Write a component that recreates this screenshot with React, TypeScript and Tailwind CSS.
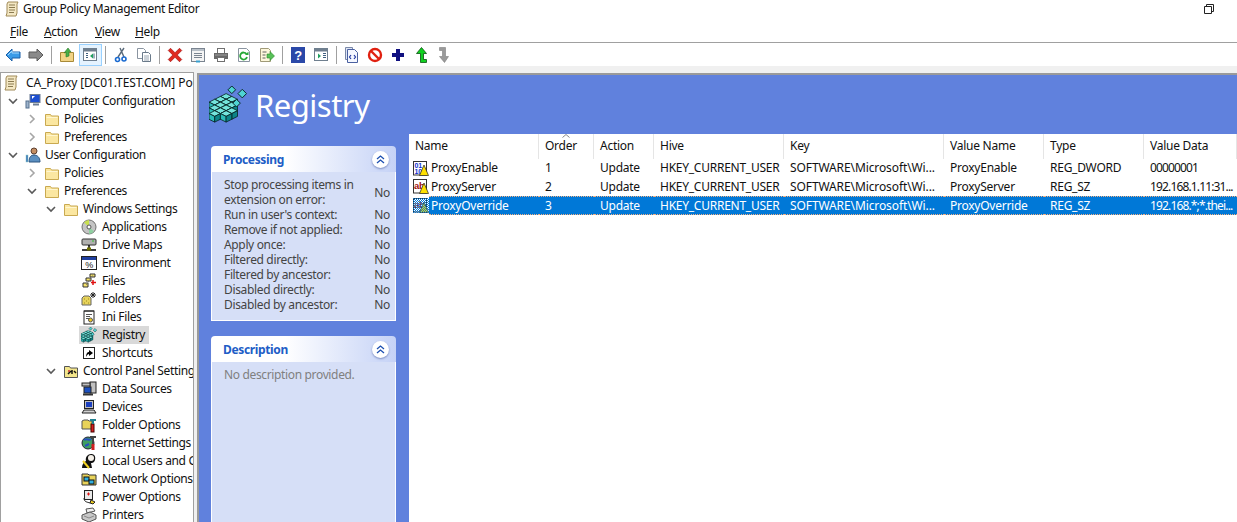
import type { ReactNode } from "react";

const Svg = ({ children, s = 16, vb = 16 }: { children: ReactNode; s?: number; vb?: number }) => (
  <svg width={s} height={s} viewBox={`0 0 ${vb} ${vb}`} className="shrink-0">
    {children}
  </svg>
);

// ---- tree chevrons
const ChevronDown = () => (
  <svg width="10" height="10" viewBox="0 0 10 10">
    <path d="M1 3l4 4 4-4" fill="none" stroke="#595959" strokeWidth="1.6" />
  </svg>
);
const ChevronRight = () => (
  <svg width="10" height="10" viewBox="0 0 10 10">
    <path d="M3 1l4 4-4 4" fill="none" stroke="#a6a6a6" strokeWidth="1.6" />
  </svg>
);

// ---- scroll / policy icon
const ScrollIcon = ({ s = 16 }: { s?: number }) => (
  <Svg s={s}>
    <path d="M4 1h10l-1 2v9l-1 3H2l1-3V3z" fill="#f4e8c4" stroke="#a08a58" />
    <path d="M5 4h6M5 6.500h6M5 9h6M5 11.500h5" stroke="#8a7a50" />
  </Svg>
);

const Folder = () => (
  <Svg>
    <path d="M1.500 3.500h5l1 1.500h7v9.500h-13z" fill="#fbe7a1" stroke="#c9a950" />
    <path d="M2.500 6.500h11" stroke="#fff6d0" />
  </Svg>
);

const MonitorIcon = () => (
  <Svg>
    <rect x="1" y="8" width="3" height="7" fill="#9fb4cc" stroke="#55708f" />
    <rect x="5" y="1.500" width="10" height="8" fill="#1d4fd0" stroke="#6d7d94" />
    <path d="M7 3l3 0-3 3z" fill="#fff" />
    <path d="M8 11.500h6" stroke="#6d7d94" strokeWidth="2" />
  </Svg>
);

const UserIcon = () => (
  <Svg>
    <circle cx="9" cy="4" r="3" fill="#c48e62" stroke="#5d4030" />
    <path d="M4 15c0-5 2-7 5-7s6 2 6 7z" fill="#5b8fc0" stroke="#2c5580" />
    <rect x="1" y="8" width="2" height="7" fill="#3a78b8" stroke="#9cc" strokeWidth=".5" />
  </Svg>
);

const CdIcon = () => (
  <Svg>
    <circle cx="8" cy="8" r="7" fill="#c4c4c4" stroke="#707070" />
    <path d="M8 8L3 3.500A7 7 0 0 1 8 1z" fill="#c8e050" />
    <path d="M8 8l5 4.500A7 7 0 0 1 8 15z" fill="#8fd0a0" />
    <circle cx="8" cy="8" r="2" fill="#fff" stroke="#555" />
  </Svg>
);

const DriveIcon = () => (
  <Svg>
    <rect x="1" y="2" width="14" height="6" rx="1" fill="#b0b0b0" stroke="#333" />
    <path d="M11 4h2" stroke="#30c030" />
    <path d="M8 8v4M1 13h14" stroke="#000" strokeWidth="1.500" />
    <rect x="6" y="10.500" width="4" height="3" fill="#707000" />
  </Svg>
);

const EnvIcon = () => (
  <Svg>
    <rect x=".5" y="1.500" width="15" height="13" fill="#fff" stroke="#222" />
    <rect x="1" y="2" width="14" height="3" fill="#1f3f9f" />
    <text x="8" y="13" fontSize="9" textAnchor="middle" fontFamily="Liberation Sans" fill="#111">%</text>
  </Svg>
);

const FilesIcon = () => (
  <Svg>
    <path d="M9 1h5v3H9zM5 5h5v3H5zM2 10h5v4H2z" fill="#f5e26a" stroke="#333" />
    <path d="M7 9L12 2M5 12l3-3" stroke="#666" strokeDasharray="1 1" />
    <path d="M12 7v5M10 9.500h5" stroke="#e01010" strokeWidth="1.500" />
  </Svg>
);

const FolderStarIcon = () => (
  <Svg>
    <path d="M1 7l2-2h5l2 2v7H1z" fill="#e8d35a" stroke="#666" />
    <path d="M3 8h1M5 10h1M3 12h1M7 8h1M7 12h1" stroke="#998a20" />
    <path d="M12 1v6M9 4h6M10 2l4 4M14 2l-4 4" stroke="#222" />
  </Svg>
);

const IniIcon = () => (
  <Svg>
    <rect x="3" y="2" width="10" height="13" fill="#fff" stroke="#222" />
    <path d="M4 1v2M6 1v2M8 1v2M10 1v2M12 1v2" stroke="#222" />
    <path d="M5 5.500h6M5 7.500h4M5 9.500h3" stroke="#555" />
    <circle cx="9.500" cy="11" r="2" fill="#f0c820" stroke="#555" />
  </Svg>
);

const Cube = ({ x, y, s }: { x: number; y: number; s: number }) => (
  <g stroke="#062424" strokeWidth={s / 7}>
    <path d={`M${x} ${y}l${s} ${-s / 2} ${s} ${s / 2} ${-s} ${s / 2}z`} fill="#74e4dc" />
    <path d={`M${x} ${y}l${s} ${s / 2}v${s}l${-s} ${-s / 2}z`} fill="#2cbcb8" />
    <path d={`M${x + 2 * s} ${y}l${-s} ${s / 2}v${s}l${s} ${-s / 2}z`} fill="#0c8488" />
  </g>
);

const cubes = [
  [12, 11], [6, 14], [18, 14], [0, 17], [12, 17], [6, 20], [18, 20],
  [0, 23], [12, 23], [18, 26], [6, 26], [0, 29], [12, 29],
];

const RegistryIcon = ({ s = 16 }: { s?: number }) => (
  <Svg s={s} vb={40}>
    {cubes.map(([x, y]) => (
      <Cube key={`${x}-${y}`} x={x} y={y} s={6} />
    ))}
    <path d="M24 0l4 4-4 4-4-4zM35 3.500l4.500 4.500-4.500 4.500-4.500-4.500zM29 14l4 4-4 4-4-4z" fill="#4fd4d4" stroke="#062424" />
  </Svg>
);

const ShortcutIcon = () => (
  <Svg>
    <rect x="2.500" y="2.500" width="11" height="11" fill="#fff" stroke="#222" />
    <path d="M5 12c0-3 1-5 3-5V5l4 3-4 3V9c-1 0-2 1-3 3z" fill="#000" />
  </Svg>
);

const CpFolderIcon = () => (
  <Svg>
    <path d="M1.500 3.500h5l1 1.500h7v9.500h-13z" fill="#f3e58a" stroke="#555" />
    <path d="M5 11l3-3M9 11V7M11 8l2 2" stroke="#111" strokeWidth="1.500" />
    <path d="M5 8h2" stroke="#d03030" strokeWidth="1.500" />
  </Svg>
);

const DataIcon = () => (
  <Svg>
    <rect x="9" y="1" width="6" height="11" fill="#c0c0c0" stroke="#222" />
    <rect x="1" y="2" width="8" height="3" fill="#c0c0c0" stroke="#222" />
    <rect x="3" y="6" width="7" height="6" fill="#1c50c0" stroke="#222" />
    <path d="M2 13.500h10" stroke="#333" strokeWidth="2" />
  </Svg>
);

const DevicesIcon = () => (
  <Svg>
    <rect x="3.500" y="1.500" width="9" height="8" fill="#c0c0c0" stroke="#222" />
    <rect x="5" y="3" width="6" height="5" fill="#1c40c0" />
    <path d="M1 14l2-3h10l2 3z" fill="#d0d0d0" stroke="#222" />
  </Svg>
);

const FolderOptIcon = () => (
  <Svg>
    <path d="M1 4l2-1h4l1 1h3v8H1z" fill="#e8d35a" stroke="#555" />
    <rect x="10" y="7" width="3" height="8" fill="#d82020" stroke="#400" />
    <path d="M9 3h6M12 3v4" stroke="#208090" strokeWidth="2" />
  </Svg>
);

const InternetIcon = () => (
  <Svg>
    <circle cx="7" cy="8" r="6" fill="#3f9f60" stroke="#223" />
    <path d="M3 5c3-2 5 1 7-1M4 11l4-2" stroke="#2850c0" strokeWidth="2" />
    <path d="M9 2h6M12 2v12" stroke="#444" strokeWidth="2" />
    <rect x="10.500" y="9" width="3" height="6" fill="#d02020" />
  </Svg>
);

const UsersIcon = () => (
  <Svg>
    <path d="M1 15c0-4 2-6 4-7-1-4 2-7 5-7 3 0 5 2 4 6-1 3-3 3-4 3l1 5z" fill="#111" />
    <circle cx="10" cy="5" r="3" fill="#f5f0e8" />
    <path d="M2 8l6 7" stroke="#f0d020" strokeWidth="2" />
  </Svg>
);

const NetworkIcon = () => (
  <Svg>
    <path d="M1 3h6l1 1h7v10H1z" fill="#e8d35a" stroke="#333" />
    <rect x="3" y="6" width="5" height="4" fill="#30b0e0" stroke="#111" />
    <rect x="8" y="9" width="5" height="4" fill="#30b0e0" stroke="#111" />
  </Svg>
);

const PowerIcon = () => (
  <Svg>
    <rect x="3.500" y="1.500" width="8" height="9" fill="#e8e8e8" stroke="#222" />
    <path d="M7.500 3.500v3M6 5h3" stroke="#e01010" />
    <path d="M3 9c0 4 3 4 6 5" fill="none" stroke="#222" />
    <path d="M10 11l4 2-2 2-3-1z" fill="#f0d020" stroke="#222" />
  </Svg>
);

const PrinterIcon = () => (
  <Svg>
    <path d="M5 2l7-1 2 3-8 2z" fill="#f0f0f0" stroke="#555" />
    <path d="M1 8l8-3 6 3v4l-7 3-7-3z" fill="#c8c8c8" stroke="#555" />
    <path d="M3 9l5 2 5-2" stroke="#888" fill="none" />
  </Svg>
);

// ---- toolbar icons
const ArrowLeft = () => (
  <Svg>
    <path d="M1 8l6-6v3h8v6H7v3z" fill="#3a9be8" stroke="#1a5fa8" />
    <path d="M3 8l4-4v2h7" fill="none" stroke="#a8dcff" />
  </Svg>
);
const ArrowRight = () => (
  <Svg>
    <path d="M15 8L9 2v3H1v6h8v3z" fill="#8a8a8a" stroke="#5a5a5a" />
  </Svg>
);
const UpFolder = () => (
  <Svg>
    <path d="M1.500 5.500h13v9h-13z" fill="#f2d486" stroke="#a88a38" />
    <path d="M7 10V5L5 6l4-5 3 4-2-.5V9z" fill="#48b048" stroke="#2a7a2a" strokeWidth=".6" />
  </Svg>
);
const PaneLeft = () => (
  <Svg>
    <rect x="1.500" y="1.500" width="13" height="12" fill="#fff" stroke="#6f7f8f" />
    <rect x="2" y="2" width="12" height="2.500" fill="#6f7f8f" />
    <path d="M4 6.500h2M4 8.500h2M4 10.500h2M12 6.500v5" stroke="#406080" />
    <path d="M11 6.500v5L8 9z" fill="#20a060" />
  </Svg>
);
const PaneRight = () => (
  <Svg>
    <rect x="1.500" y="1.500" width="13" height="12" fill="#fff" stroke="#6f7f8f" />
    <rect x="2" y="2" width="12" height="2.500" fill="#6f7f8f" />
    <path d="M10 6.500h3M10 8.500h3M10 10.500h3" stroke="#406080" />
    <path d="M5 6.500v5L8 9z" fill="#20a060" />
  </Svg>
);
const CutIcon = () => (
  <Svg>
    <path d="M5 10l6-9M11 10L7 1" stroke="#5a6a7a" strokeWidth="1.400" />
    <circle cx="4.500" cy="12.500" r="2" fill="none" stroke="#1a6ad0" strokeWidth="1.600" />
    <circle cx="11" cy="12" r="2" fill="none" stroke="#1a6ad0" strokeWidth="1.600" />
  </Svg>
);
const CopyIcon = () => (
  <Svg>
    <path d="M1.500 1.500h6l2 2v8h-8z" fill="#fff" stroke="#8a94a0" />
    <path d="M6.500 5.500h6l2 2v7h-8z" fill="#fff" stroke="#6a7a8a" />
    <path d="M8 9h5M8 11h5M8 13h5" stroke="#9aa6b2" />
  </Svg>
);
const DeleteIcon = () => (
  <Svg s={18} vb={16}>
    <path d="M2 4l2-2 4 4 4-4 2 2-4 4 4 4-2 2-4-4-4 4-2-2 4-4z" fill="#e02a20" stroke="#a01010" strokeWidth=".6" />
  </Svg>
);
const PropsIcon = () => (
  <Svg>
    <rect x="1.500" y="1.500" width="13" height="13" fill="#f4f4f4" stroke="#7a8490" />
    <rect x="2" y="2" width="12" height="2" fill="#b8c0c8" />
    <path d="M4 6.500h8M4 8.500h8M4 10.500h8" stroke="#7a8490" />
    <path d="M6 14.500h4" stroke="#38a0d0" strokeWidth="2" />
  </Svg>
);
const PrintIcon = () => (
  <Svg>
    <rect x="4.500" y="1.500" width="7" height="5" fill="#fff" stroke="#707070" />
    <rect x="1" y="6" width="14" height="6" fill="#686868" />
    <rect x="4.500" y="10.500" width="7" height="4" fill="#fff" stroke="#707070" />
    <path d="M2 8h12" stroke="#a0a0a0" />
  </Svg>
);
const RefreshIcon = () => (
  <Svg>
    <path d="M2.500 1.500h8l3 3v10h-11z" fill="#fff" stroke="#8a94a0" />
    <path d="M10.500 7a3.500 3.500 0 1 0 .5 3" fill="none" stroke="#28a838" strokeWidth="1.800" />
    <path d="M9 8h3.500V4.500z" fill="#28a838" />
  </Svg>
);
const ExportIcon = () => (
  <Svg>
    <path d="M1.500 1.500h8l2 2v11h-10z" fill="#fdf7dc" stroke="#a09a78" />
    <path d="M3.500 5h4M3.500 8h3M3.500 11h3" stroke="#606060" />
    <path d="M8 7h3V4.500L15.500 9 11 13.500V11H8z" fill="#58c058" stroke="#2a8a2a" strokeWidth=".6" />
  </Svg>
);
const HelpIcon = () => (
  <svg width="14" height="16" viewBox="0 0 14 16">
    <rect width="14" height="16" fill="#2a48a8" />
    <text x="7" y="13" fontSize="13" fontWeight="700" textAnchor="middle" fontFamily="Liberation Sans" fill="#fff">?</text>
  </svg>
);
const DocCodeIcon = () => (
  <Svg>
    <path d="M1.500 .5h7v12h-7z" fill="#dfe6f6" stroke="#7a88a8" />
    <path d="M3.500 2.500h7l3 3v10h-10z" fill="#f4f7ff" stroke="#4a60a0" />
    <path d="M7 8L5.500 10 7 12M10 8l1.500 2L10 12" fill="none" stroke="#2038a0" strokeWidth="1.200" />
  </Svg>
);
const NoIcon = () => (
  <Svg>
    <circle cx="8" cy="8" r="6" fill="#fff" stroke="#e02010" strokeWidth="2.400" />
    <path d="M4 4l8 8" stroke="#e02010" strokeWidth="2.400" />
  </Svg>
);
const PlusIcon = () => (
  <svg width="12" height="12" viewBox="0 0 12 12">
    <path d="M4 0h4v4h4v4H8v4H4V8H0V4h4z" fill="#101080" />
  </svg>
);
const UpGreen = () => (
  <svg width="11" height="16" viewBox="0 0 11 16">
    <path d="M5.500 .5l5 6H7.500v6h3v3h-6v-9H.5z" fill="#10d020" stroke="#0a5010" strokeWidth=".8" />
  </svg>
);
const DownGray = () => (
  <svg width="11" height="16" viewBox="0 0 11 16">
    <path d="M.5 .5h6v9h3l-4 6-5-6h3v-6h-3z" fill="#9a9a9a" stroke="#808080" strokeWidth=".6" />
  </svg>
);

// ---- list icons
const RegDoc = ({ kind, selected }: { kind: "bin" | "ab"; selected?: boolean }) => (
  <svg width="16" height="15" viewBox="0 0 16 15" className="shrink-0">
    <defs>
      <pattern id="dither" width="2" height="2" patternUnits="userSpaceOnUse">
        <rect width="1" height="1" fill="#0078d7" />
        <rect x="1" y="1" width="1" height="1" fill="#0078d7" />
      </pattern>
    </defs>
    <rect x=".5" y=".5" width="13" height="13.500" fill="#fff" stroke="#333" />
    {kind === "bin" ? (
      <g fill="#1030d0" fontFamily="Liberation Sans" fontWeight="700" fontSize="7">
        <text x="1.500" y="6.500">01</text>
        <text x="1.500" y="13">10</text>
      </g>
    ) : (
      <text x="1" y="10" fill="#a01010" fontFamily="Liberation Sans" fontWeight="700" fontSize="9.500">ab</text>
    )}
    <path d="M11 4l4.500 10.500H6.500z" fill="#ffe000" stroke="#222" strokeWidth=".7" />
    {selected && <rect width="16" height="15" fill="url(#dither)" />}
  </svg>
);

// ---- tree
const pads = {
  0: "pl-[7px]",
  1: "pl-[26px]",
  2: "pl-[45px]",
  3: "pl-[80px]",
};

type TreeItem = {
  label: string;
  level: 0 | 1 | 2 | 3;
  icon: ReactNode;
  chevron?: "down" | "right";
  active?: boolean;
};

const tree: TreeItem[] = [
  { label: "Computer Configuration", level: 0, icon: <MonitorIcon />, chevron: "down" },
  { label: "Policies", level: 1, icon: <Folder />, chevron: "right" },
  { label: "Preferences", level: 1, icon: <Folder />, chevron: "right" },
  { label: "User Configuration", level: 0, icon: <UserIcon />, chevron: "down" },
  { label: "Policies", level: 1, icon: <Folder />, chevron: "right" },
  { label: "Preferences", level: 1, icon: <Folder />, chevron: "down" },
  { label: "Windows Settings", level: 2, icon: <Folder />, chevron: "down" },
  { label: "Applications", level: 3, icon: <CdIcon /> },
  { label: "Drive Maps", level: 3, icon: <DriveIcon /> },
  { label: "Environment", level: 3, icon: <EnvIcon /> },
  { label: "Files", level: 3, icon: <FilesIcon /> },
  { label: "Folders", level: 3, icon: <FolderStarIcon /> },
  { label: "Ini Files", level: 3, icon: <IniIcon /> },
  { label: "Registry", level: 3, icon: <RegistryIcon />, active: true },
  { label: "Shortcuts", level: 3, icon: <ShortcutIcon /> },
  { label: "Control Panel Settings", level: 2, icon: <CpFolderIcon />, chevron: "down" },
  { label: "Data Sources", level: 3, icon: <DataIcon /> },
  { label: "Devices", level: 3, icon: <DevicesIcon /> },
  { label: "Folder Options", level: 3, icon: <FolderOptIcon /> },
  { label: "Internet Settings", level: 3, icon: <InternetIcon /> },
  { label: "Local Users and Groups", level: 3, icon: <UsersIcon /> },
  { label: "Network Options", level: 3, icon: <NetworkIcon /> },
  { label: "Power Options", level: 3, icon: <PowerIcon /> },
  { label: "Printers", level: 3, icon: <PrinterIcon /> },
];

const TreeRow = ({ item }: { item: TreeItem }) => (
  <div className={`flex h-[18px] items-center whitespace-nowrap ${pads[item.level]}`}>
    {item.level < 3 && (
      <span className="flex w-[10px] justify-center">
        {item.chevron === "down" ? <ChevronDown /> : <ChevronRight />}
      </span>
    )}
    <span
      className={`flex h-[18px] items-center ${item.level < 3 ? "ml-[7px] gap-[4px]" : "gap-[5px]"} ${
        item.active ? "ml-[-2px] bg-[#d9d9d9] pl-[2px] pr-[4px]" : ""
      }`}
    >
      {item.icon}
      <span>{item.label}</span>
    </span>
  </div>
);

// ---- toolbar
const Sep = () => <span className="mx-[3.5px] h-[18px] w-px bg-[#a0a0a0]" />;
const Tool = ({ children, active }: { children: ReactNode; active?: boolean }) => (
  <span
    className={`flex h-[22px] w-[23px] items-center justify-center ${active ? "border border-[#99d1ff] bg-[#e5f3ff]" : ""}`}
  >
    {children}
  </span>
);

// ---- task panels
const Collapse = () => (
  <span className="flex h-[17px] w-[17px] items-center justify-center rounded-full bg-white shadow-[0_1px_2px_#7a8cc0]">
    <svg width="9" height="9" viewBox="0 0 9 9">
      <path d="M1 4l3.500-3L8 4M1 8l3.500-3L8 8" fill="none" stroke="#1c4fb0" strokeWidth="1.300" />
    </svg>
  </span>
);

const PanelHead = ({ title }: { title: string }) => (
  <div className="flex h-[26px] items-center justify-between rounded-t-[4px] bg-gradient-to-r from-white from-40% to-[#c5d2f6] pl-[12px] pr-[7px]">
    <span className="pt-[2px] font-bold text-[#215dc6]">{title}</span>
    <Collapse />
  </div>
);

const settings = [
  "Run in user's context:",
  "Remove if not applied:",
  "Apply once:",
  "Filtered directly:",
  "Filtered by ancestor:",
  "Disabled directly:",
  "Disabled by ancestor:",
];

const Setting = ({ children }: { children: ReactNode }) => (
  <div className="flex items-center justify-between pr-[5px] leading-[15px]">
    <span>{children}</span>
    <span>No</span>
  </div>
);

// ---- list
type Row = { name: string; order: string; value: string; type: string; data: string; kind: "bin" | "ab"; h: string };

const rows: Row[] = [
  { name: "ProxyEnable", order: "1", value: "ProxyEnable", type: "REG_DWORD", data: "00000001", kind: "bin", h: "h-[18px]" },
  { name: "ProxyServer", order: "2", value: "ProxyServer", type: "REG_SZ", data: "192.168.1.11:31...", kind: "ab", h: "h-[19px]" },
  { name: "ProxyOverride", order: "3", value: "ProxyOverride", type: "REG_SZ", data: "192.168.*;*.thei...", kind: "ab", h: "h-[19px]" },
];

const headers = [
  { label: "Name", w: "w-[130px]" },
  { label: "Order", w: "w-[55px]" },
  { label: "Action", w: "w-[60px]" },
  { label: "Hive", w: "w-[130px]" },
  { label: "Key", w: "w-[160px]" },
  { label: "Value Name", w: "w-[100px]" },
  { label: "Type", w: "w-[100px]" },
  { label: "Value Data", w: "w-[93px]" },
];

const Cell = ({ w, sel, children }: { w: string; sel: boolean; children: ReactNode }) => (
  <span
    className={`${w} flex items-center overflow-hidden whitespace-nowrap pl-[6px] ${
      sel ? "border-y border-dotted border-[#f4b183] bg-[#0078d7]" : ""
    }`}
  >
    {children}
  </span>
);

const App = () => {
  return (
    <div className="flex h-[522px] w-[1237px] flex-col overflow-hidden bg-white font-['Noto_Sans',sans-serif] text-[12px] tracking-[-0.35px] text-[#111]">
      <div className="flex h-[21px] items-center justify-between pb-[3px] pl-[4px] pr-[23px]">
        <div className="flex items-center gap-[3px]">
          <ScrollIcon />
          <span>Group Policy Management Editor</span>
        </div>
        <svg width="10" height="10" viewBox="0 0 10 10">
          <path d="M.5 2.500h7v7h-7zM2.500 2.500v-2h7v7h-2" fill="none" stroke="#222" />
        </svg>
      </div>

      <div className="flex h-[22px] items-center border-b border-[#a0a0a0] pl-[10px]">
        <span className="w-[34px]"><u>F</u>ile</span>
        <span className="w-[51px]"><u>A</u>ction</span>
        <span className="w-[40px]"><u>V</u>iew</span>
        <span><u>H</u>elp</span>
      </div>

      <div className="flex h-[23px] items-center pl-[1.5px]">
        <Tool><ArrowLeft /></Tool>
        <Tool><ArrowRight /></Tool>
        <Sep />
        <Tool><UpFolder /></Tool>
        <Tool active><PaneLeft /></Tool>
        <Sep />
        <Tool><CutIcon /></Tool>
        <Tool><CopyIcon /></Tool>
        <Sep />
        <Tool><DeleteIcon /></Tool>
        <Tool><PropsIcon /></Tool>
        <Tool><PrintIcon /></Tool>
        <Tool><RefreshIcon /></Tool>
        <Tool><ExportIcon /></Tool>
        <Sep />
        <Tool><HelpIcon /></Tool>
        <Tool><PaneRight /></Tool>
        <Sep />
        <Tool><DocCodeIcon /></Tool>
        <Tool><NoIcon /></Tool>
        <Tool><PlusIcon /></Tool>
        <Tool><UpGreen /></Tool>
        <Tool><DownGray /></Tool>
      </div>

      <div className="h-[6px] bg-[#f0f0f0]" />

      <div className="flex min-h-0 flex-1 bg-[#f0f0f0]">
        <div className="w-[194px] overflow-hidden border border-b-0 border-[#a0a0a0] bg-white pt-px">
          <div className="flex h-[18px] items-center gap-[7px] whitespace-nowrap pl-[2px] tracking-[-0.1px]">
            <ScrollIcon />
            <span>CA_Proxy [DC01.TEST.COM] Policy</span>
          </div>
          {tree.map((item, i) => (
            <TreeRow key={i} item={item} />
          ))}
        </div>

        <div className="ml-[3px] mt-px flex min-w-0 flex-1 flex-col border-l-2 border-t-2 border-[#9a9a9a] bg-[#6081dd]">
          <div className="flex h-[59px] shrink-0 items-center gap-[8px] pl-[10px] pt-[1px] text-white">
            <RegistryIcon s={38} />
            <span className="text-[31px] leading-none tracking-[-0.5px]">Registry</span>
          </div>

          <div className="flex min-h-0 flex-1">
            <div className="ml-[12px] mr-[13px] flex w-[185px] shrink-0 flex-col gap-[15px] pt-[12px] text-[#444]">
              <div className="h-[175px] shrink-0">
                <PanelHead title="Processing" />
                <div className="h-[149px] border border-t-0 border-white bg-[#d6dff7] pl-[12px] pt-[5px]">
                  <Setting>
                    Stop processing items in
                    <br />
                    extension on error:
                  </Setting>
                  {settings.map((s) => (
                    <Setting key={s}>{s}</Setting>
                  ))}
                </div>
              </div>
              <div className="flex min-h-0 flex-1 flex-col">
                <PanelHead title="Description" />
                <div className="flex-1 border-x border-white bg-[#d6dff7] pl-[12px] pt-[4px] text-[#808080]">
                  No description provided.
                </div>
              </div>
            </div>

            <div className="relative min-w-0 flex-1 bg-white tracking-[-0.25px]">
              <svg width="8" height="4" viewBox="0 0 8 4" className="absolute left-[153px] top-[0px]">
                <path d="M.5 3.500L4 .5l3.500 3" fill="none" stroke="#888" />
              </svg>
              <div className="flex h-[25px]">
                {headers.map((h) => (
                  <span key={h.label} className={`${h.w} flex items-center border-r border-[#e5e5e5] pb-[2px] pl-[6px]`}>
                    {h.label}
                  </span>
                ))}
              </div>
              {rows.map((r, i) => {
                const sel = i === 2;
                return (
                  <div key={r.name} className={`flex ${r.h} ${sel ? "text-white" : ""}`}>
                    <span className="flex w-[130px] items-center pl-[4px]">
                      <RegDoc kind={r.kind} selected={sel} />
                      <span
                        className={`flex h-full flex-1 items-center pl-[2px] ${
                          sel ? "border-y border-dotted border-[#f4b183] bg-[#0078d7]" : ""
                        }`}
                      >
                        {r.name}
                      </span>
                    </span>
                    <Cell w="w-[55px]" sel={sel}>{r.order}</Cell>
                    <Cell w="w-[60px]" sel={sel}>Update</Cell>
                    <Cell w="w-[130px]" sel={sel}>HKEY_CURRENT_USER</Cell>
                    <Cell w="w-[160px] tracking-[-0.1px]" sel={sel}>SOFTWARE\Microsoft\Wi...</Cell>
                    <Cell w="w-[100px]" sel={sel}>{r.value}</Cell>
                    <Cell w="w-[100px]" sel={sel}>{r.type}</Cell>
                    <Cell w="w-[93px] tracking-[-0.85px]" sel={sel}>{r.data}</Cell>
                  </div>
                );
              })}
            </div>
          </div>
        </div>
      </div>
    </div>
  );
};

export default App;
